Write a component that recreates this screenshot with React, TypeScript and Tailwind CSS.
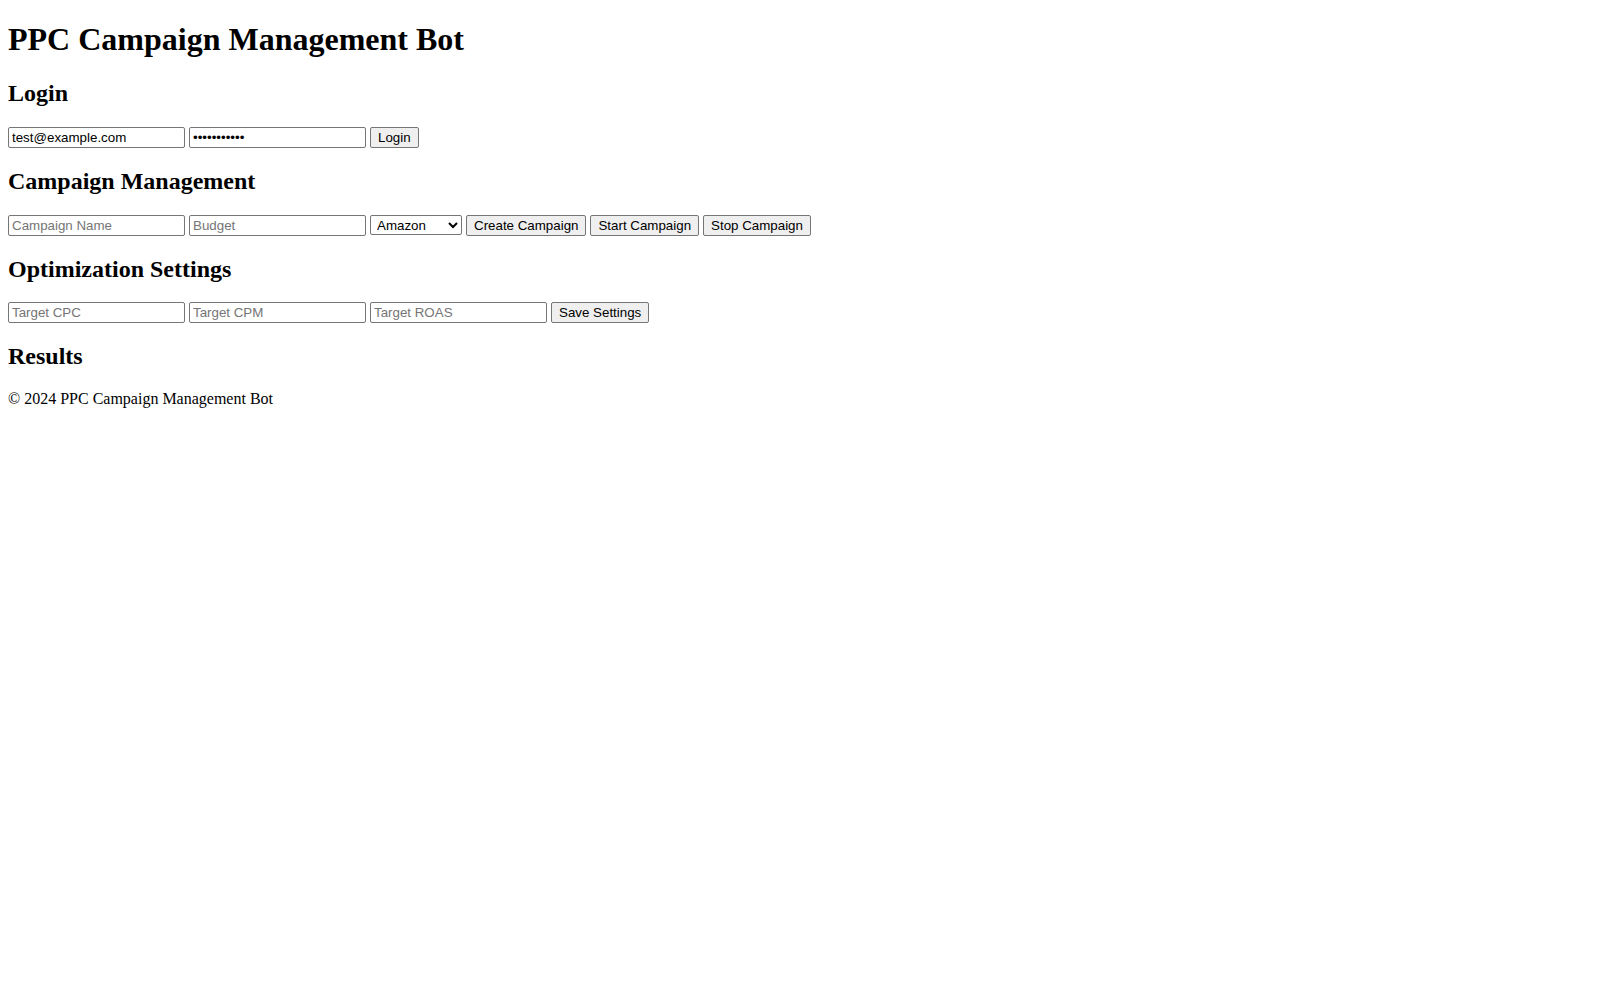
import React, { useState } from 'react';

const inputCls =
  "w-[177px] h-[21px] border border-[#767676] rounded-[2px] pl-[3px] pr-[2px] py-[1px] text-[13.333px] leading-[normal] text-black bg-white placeholder:text-[#757575] font-['Liberation_Sans',Arial,sans-serif]";
const btnCls =
  "h-[21px] border border-[#767676] rounded-[2px] px-[7px] py-[1px] text-[13.333px] leading-[normal] text-black bg-[#efefef] font-['Liberation_Sans',Arial,sans-serif]";

export default function App() {
  const [email, setEmail] = useState('test@example.com');
  const [password, setPassword] = useState('password123');

  return (
    <div className="m-2 bg-white text-black text-base font-['Liberation_Serif','Times_New_Roman',serif]">
      <header>
        <h1 className="text-[32px] font-bold leading-[normal] my-[21.44px]">PPC Campaign Management Bot</h1>
      </header>

      {/* Login */}
      <section>
        <h2 className="text-[24px] font-bold leading-[normal] my-[19.92px]">Login</h2>
        <div className="flex items-center gap-1">
          <input className={inputCls} type="email" value={email} onChange={e => setEmail(e.target.value)} />
          <input className={inputCls} type="password" value={password} onChange={e => setPassword(e.target.value)} />
          <button className={btnCls}>Login</button>
        </div>
      </section>

      {/* Campaigns */}
      <section>
        <h2 className="text-[24px] font-bold leading-[normal] my-[19.92px]">Campaign Management</h2>
        <div className="flex items-center gap-1">
          <input className={inputCls} type="text" placeholder="Campaign Name" />
          <input className={inputCls} type="number" placeholder="Budget" />
          <select className="w-[92px] h-[20px] border border-[#767676] rounded-[2px] pl-[2px] text-[13.333px] text-black bg-white font-['Liberation_Sans',Arial,sans-serif]">
            <option>Amazon</option>
            <option>Google</option>
            <option>Facebook</option>
          </select>
          <button className={btnCls}>Create Campaign</button>
          <button className={btnCls}>Start Campaign</button>
          <button className={btnCls}>Stop Campaign</button>
        </div>
      </section>

      {/* Optimization */}
      <section>
        <h2 className="text-[24px] font-bold leading-[normal] my-[19.92px]">Optimization Settings</h2>
        <div className="flex items-center gap-1">
          <input className={inputCls} type="number" placeholder="Target CPC" />
          <input className={inputCls} type="number" placeholder="Target CPM" />
          <input className={inputCls} type="number" placeholder="Target ROAS" />
          <button className={btnCls}>Save Settings</button>
        </div>
      </section>

      <section>
        <h2 className="text-[24px] font-bold leading-[normal] mt-[19.92px] mb-[17px]">Results</h2>
        <div></div>
      </section>

      <footer>
        <p className="my-4">© 2024 PPC Campaign Management Bot</p>
      </footer>
    </div>
  );
}
